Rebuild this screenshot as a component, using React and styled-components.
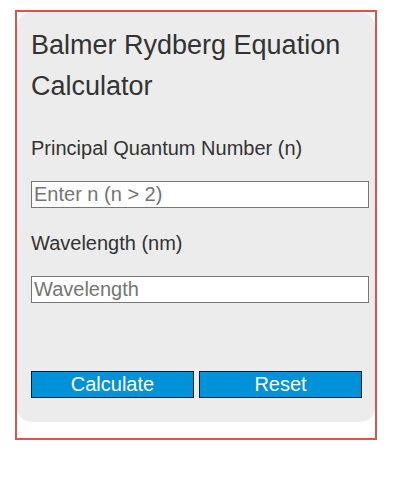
import React from "react";
import styled, { createGlobalStyle } from "styled-components";

const Global = createGlobalStyle`
  html, body { margin: 0; padding: 0; background: #fff; }
  body { font-family: "Liberation Sans", Arial, sans-serif; }
  * { box-sizing: border-box; }
`;

const Frame = styled.div`
  margin: 10px 0 0 15px;
  width: 362px;
  border: 2px solid #d9534f;
  padding-bottom: 16px;
`;

const Card = styled.div`
  background: #ececec;
  border-radius: 15px;
  padding: 13px 6px 24px 14px;
`;

const Title = styled.h1`
  margin: 0;
  font-size: 27px;
  line-height: 40.5px;
  font-weight: 400;
  color: #333;
`;

const Label = styled.label`
  display: block;
  font-size: 20px;
  line-height: 23px;
  color: #333;
  margin: ${(p) => p.$top}px 0 21px;
`;

const Input = styled.input`
  display: block;
  width: 338px;
  height: 27px;
  margin: 0;
  padding: 1px 2px;
  border: 1px solid #767676;
  border-radius: 0;
  background: #fff;
  font-family: "Liberation Sans", Arial, sans-serif;
  font-size: 20px;
  color: #333;
  &::placeholder { color: #757575; }
`;

const Buttons = styled.div`
  display: flex;
  gap: 5px;
  margin-top: 68px;
`;

const Button = styled.button`
  width: 163px;
  height: 27px;
  padding: 0;
  border: 1px solid #1b1b1b;
  border-radius: 0;
  background: #0092d8;
  color: #fff;
  font-family: "Liberation Sans", Arial, sans-serif;
  font-size: 20px;
  line-height: 23px;
  cursor: pointer;
`;

export default function App() {
  return (
    <>
      <Global />
      <Frame>
        <Card>
          <Title>Balmer Rydberg Equation Calculator</Title>
          <Label $top={31}>Principal Quantum Number (n)</Label>
          <Input placeholder="Enter n (n > 2)" />
          <Label $top={24}>Wavelength (nm)</Label>
          <Input placeholder="Wavelength" />
          <Buttons>
            <Button>Calculate</Button>
            <Button>Reset</Button>
          </Buttons>
        </Card>
      </Frame>
    </>
  );
}
